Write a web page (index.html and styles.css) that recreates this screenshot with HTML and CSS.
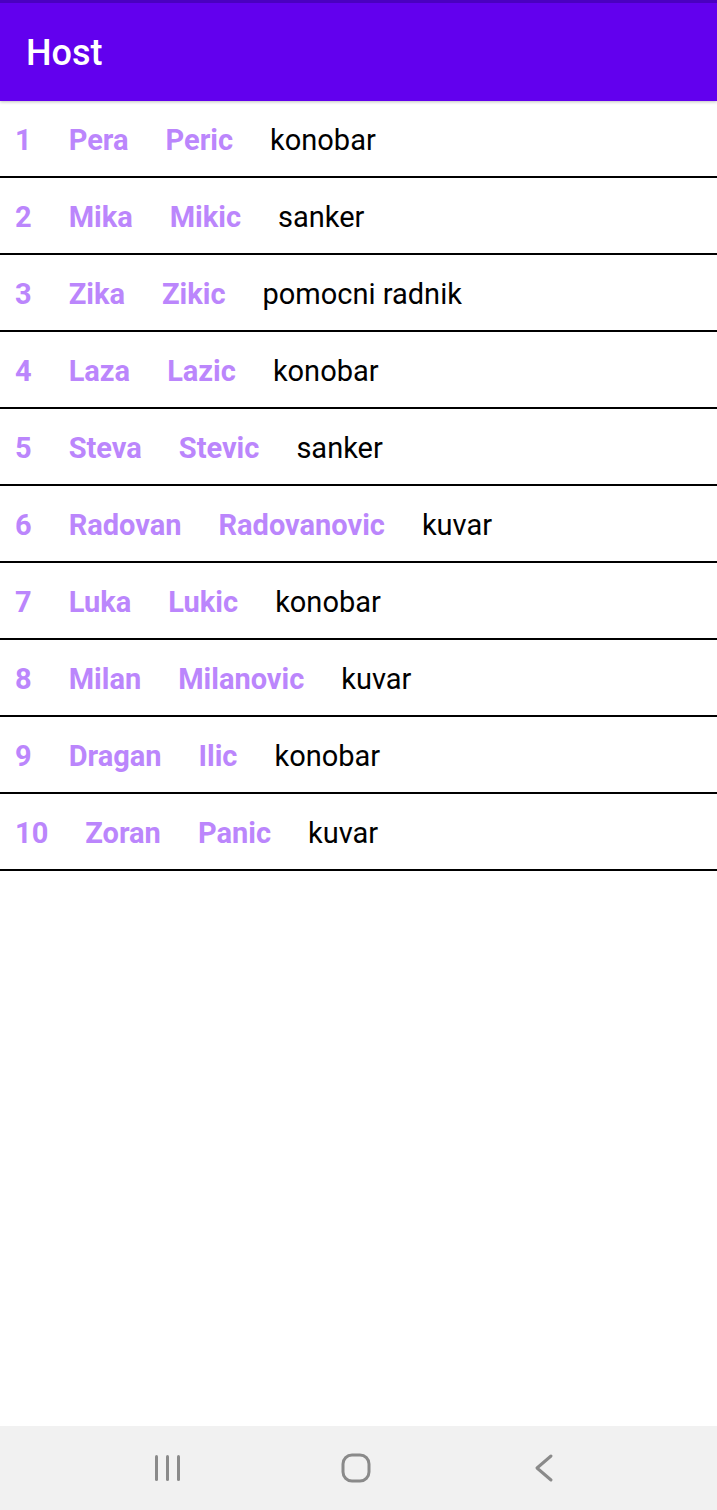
FILE: index.html
```html
<!DOCTYPE html>
<html>
<head>
<meta charset="utf-8">
<link rel="stylesheet" href="styles.css">
</head>
<body>
<div class="screen">
  <header class="appbar"><h1 class="title">Host</h1></header>
  <ul class="list">
    <li class="row"><span class="id">1</span><span class="name">Pera</span><span class="name">Peric</span><span class="role">konobar</span></li>
    <li class="row"><span class="id">2</span><span class="name">Mika</span><span class="name">Mikic</span><span class="role">sanker</span></li>
    <li class="row"><span class="id">3</span><span class="name">Zika</span><span class="name">Zikic</span><span class="role">pomocni radnik</span></li>
    <li class="row"><span class="id">4</span><span class="name">Laza</span><span class="name">Lazic</span><span class="role">konobar</span></li>
    <li class="row"><span class="id">5</span><span class="name">Steva</span><span class="name">Stevic</span><span class="role">sanker</span></li>
    <li class="row"><span class="id">6</span><span class="name">Radovan</span><span class="name">Radovanovic</span><span class="role">kuvar</span></li>
    <li class="row"><span class="id">7</span><span class="name">Luka</span><span class="name">Lukic</span><span class="role">konobar</span></li>
    <li class="row"><span class="id">8</span><span class="name">Milan</span><span class="name">Milanovic</span><span class="role">kuvar</span></li>
    <li class="row"><span class="id">9</span><span class="name">Dragan</span><span class="name">Ilic</span><span class="role">konobar</span></li>
    <li class="row"><span class="id">10</span><span class="name">Zoran</span><span class="name">Panic</span><span class="role">kuvar</span></li>
  </ul>
  <nav class="navbar">
    <svg class="nav-icon" width="30" height="30" viewBox="0 0 30 30"><g stroke="#8a8a8a" stroke-width="3" stroke-linecap="round"><line x1="3.5" y1="3.5" x2="3.5" y2="26.5"/><line x1="14.5" y1="3.5" x2="14.5" y2="26.5"/><line x1="25.5" y1="3.5" x2="25.5" y2="26.5"/></g></svg>
    <svg class="nav-icon" width="30" height="30" viewBox="0 0 30 30"><rect x="2" y="2" width="26" height="26" rx="9" fill="none" stroke="#8a8a8a" stroke-width="3"/></svg>
    <svg class="nav-icon" width="30" height="30" viewBox="0 0 30 30"><polyline points="22,3 8,15 22,27" fill="none" stroke="#8a8a8a" stroke-width="3" stroke-linecap="round" stroke-linejoin="round"/></svg>
  </nav>
</div>
</body>
</html>
```
FILE: styles.css
```css
html, body {
  margin: 0;
  padding: 0;
  background: #ffffff;
}
.screen {
  width: 717px;
  height: 1510px;
  display: flex;
  flex-direction: column;
  font-family: Roboto, "Noto Sans", sans-serif;
  overflow: hidden;
}
.appbar {
  height: 98px;
  background: #6200ee;
  border-top: 3px solid #4a00c0;
  display: flex;
  align-items: center;
  padding-left: 26px;
  box-shadow: 0 1px 3px rgba(0,0,0,0.25);
  position: relative;
  z-index: 1;
}
.title {
  margin: 0;
  margin-top: 2px;
  font-size: 36px;
  font-weight: 500;
  color: #ffffff;
  line-height: 1;
}
.list {
  list-style: none;
  margin: 0;
  padding: 0;
  flex: 1;
}
.row {
  border-bottom: 2px solid #000000;
  display: flex;
  align-items: center;
  padding-left: 15px;
  padding-top: 2px;
  box-sizing: border-box;
  height: 77px;
  gap: 37px;
  font-size: 29px;
}
.id, .name {
  font-weight: 700;
  color: #bb86fc;
}
.role {
  color: #000000;
  font-weight: 400;
}
.navbar {
  height: 84px;
  background: #f1f1f1;
  display: flex;
  align-items: center;
  padding-left: 153px;
  gap: 158px;
}
.nav-icon {
  display: block;
}
```
